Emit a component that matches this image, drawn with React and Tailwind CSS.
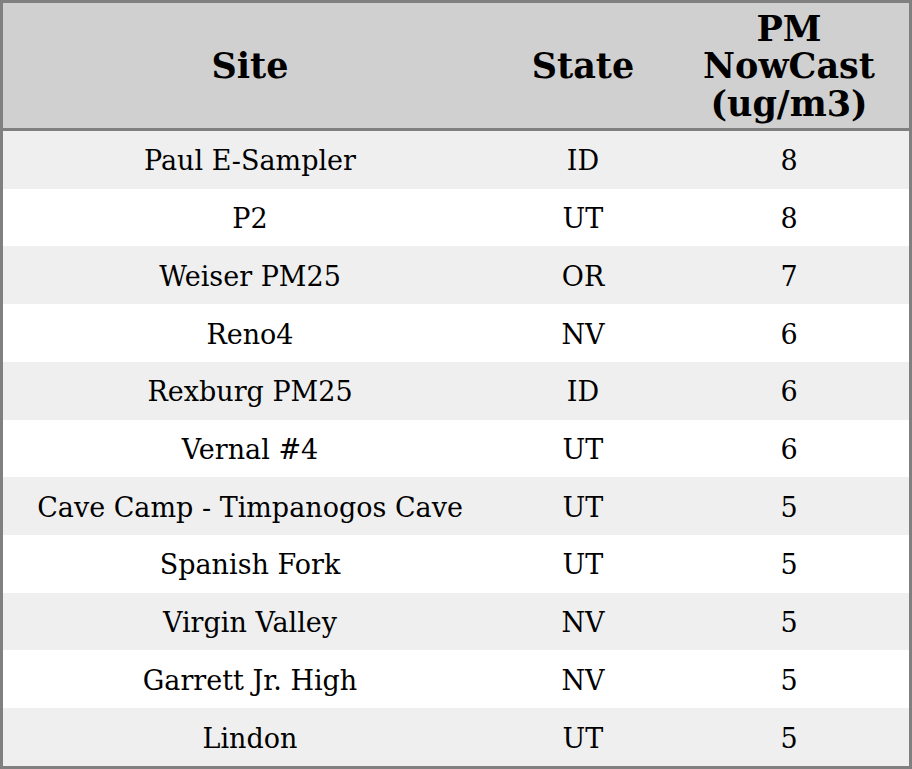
import React from "react";

const rows = [
  ["Paul E-Sampler", "ID", "8"],
  ["P2", "UT", "8"],
  ["Weiser PM25", "OR", "7"],
  ["Reno4", "NV", "6"],
  ["Rexburg PM25", "ID", "6"],
  ["Vernal #4", "UT", "6"],
  ["Cave Camp - Timpanogos Cave", "UT", "5"],
  ["Spanish Fork", "UT", "5"],
  ["Virgin Valley", "NV", "5"],
  ["Garrett Jr. High", "NV", "5"],
  ["Lindon", "UT", "5"],
];

export default function App() {
  return (
    <div className="w-[912px] h-[769px] bg-white">
      <div
        className="w-[912px] h-[769px] border-[3px] border-[#808080] text-black"
        style={{ fontFamily: '"DejaVu Serif", serif' }}
      >
        {/* header */}
        <div className="grid grid-cols-[494px_172px_240px] h-[128px] bg-[#d0d0d0] border-b-[3px] border-[#808080] text-[35px] font-bold leading-[37.5px]">
          <div className="flex items-center justify-center text-center">Site</div>
          <div className="flex items-center justify-center text-center">State</div>
          <div className="flex items-center justify-center text-center pt-[1px]">
            PM
            <br />
            NowCast
            <br />
            (ug/m3)
          </div>
        </div>

        {rows.map((r, i) => (
          <div
            key={i}
            className={
              "grid grid-cols-[494px_172px_240px] h-[57.73px] pt-[3px] text-[27px] leading-[30px] " +
              (i % 2 === 0 ? "bg-[#efefef]" : "bg-white")
            }
          >
            <div className="flex items-center justify-center">{r[0]}</div>
            <div className="flex items-center justify-center">{r[1]}</div>
            <div className="flex items-center justify-center">{r[2]}</div>
          </div>
        ))}
      </div>
    </div>
  );
}
